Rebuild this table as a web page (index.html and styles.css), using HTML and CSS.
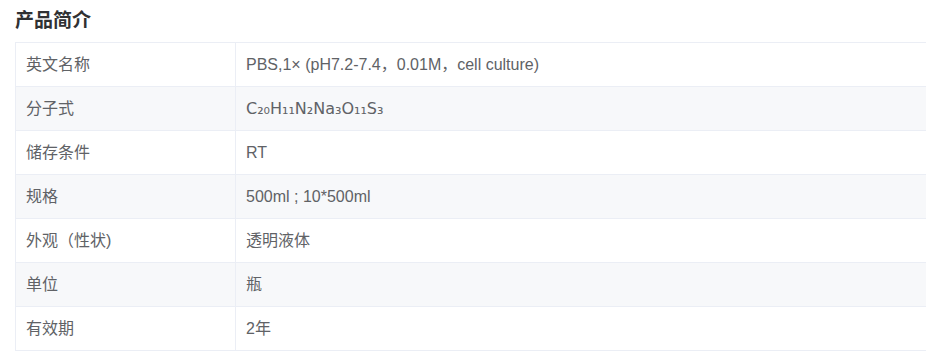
FILE: index.html
```html
<!DOCTYPE html>
<html lang="zh-CN">
<head>
<meta charset="utf-8">
<title>产品简介</title>
<link rel="stylesheet" href="styles.css">
</head>
<body>
<div class="page">
  <h2 class="title">产品简介</h2>
  <div class="table-wrap">
    <table class="info">
      <tbody>
        <tr><td class="key">英文名称</td><td class="val">PBS,1× (pH7.2-7.4，0.01M，cell culture)</td></tr>
        <tr class="stripe"><td class="key">分子式</td><td class="val formula">C₂₀H₁₁N₂Na₃O₁₁S₃</td></tr>
        <tr><td class="key">储存条件</td><td class="val">RT</td></tr>
        <tr class="stripe"><td class="key">规格</td><td class="val">500ml ; 10*500ml</td></tr>
        <tr><td class="key">外观（性状)</td><td class="val">透明液体</td></tr>
        <tr class="stripe"><td class="key">单位</td><td class="val">瓶</td></tr>
        <tr><td class="key">有效期</td><td class="val">2年</td></tr>
      </tbody>
    </table>
  </div>
</div>
</body>
</html>
```
FILE: styles.css
```css
html, body {
  margin: 0;
  padding: 0;
  background: #fff;
  overflow: hidden;
}
.page {
  padding: 0 0 0 15px;
  font-family: "Liberation Sans", Arial, "Noto Sans CJK SC", sans-serif;
  color: #606266;
}
.title {
  margin: 0;
  padding-top: 8px;
  height: 42px;
  box-sizing: border-box;
  font-size: 19px;
  line-height: 22px;
  font-weight: bold;
  color: #303133;
  font-family: "Noto Sans CJK SC", sans-serif;
}
.table-wrap {
  overflow: hidden;
}
.info {
  border-collapse: collapse;
  width: 1100px;
  table-layout: fixed;
  font-size: 16px;
}
.info td {
  border: 1px solid #ebeef5;
  height: 44px;
  box-sizing: border-box;
  padding: 0 10px;
  vertical-align: middle;
  line-height: 22px;
}
.info .key {
  width: 220px;
}
.info .formula {
  font-family: "DejaVu Sans", "Liberation Sans", sans-serif;
  font-size: 16px;
}
.info tr.stripe td {
  background: #f7f8fa;
}
```
